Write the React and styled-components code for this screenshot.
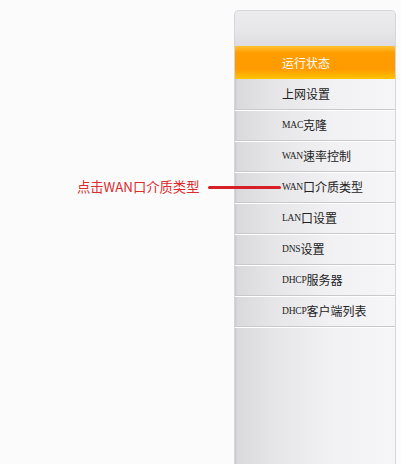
import React from 'react';
import styled, { createGlobalStyle } from 'styled-components';

const GlobalStyle = createGlobalStyle`
  html, body {
    margin: 0;
    padding: 0;
    background: #fbfbfc;
  }
`;

const Page = styled.div`
  width: 401px;
  height: 464px;
  display: flex;
  justify-content: flex-end;
  overflow: hidden;
  padding-top: 10px;
  box-sizing: border-box;
  position: relative;
`;

const Panel = styled.nav`
  width: 160px;
  margin-right: 5px;
  height: 470px;
  border: 1px solid #d6d6da;
  border-bottom: none;
  border-radius: 5px 5px 0 0;
  background: linear-gradient(90deg, #d9d9dc 0%, #e6e6e9 25%, #f1f0f3 60%, #f6f5f8 100%);
  box-shadow: inset 2px 0 2px -1px #c8c8cc;
  display: flex;
  flex-direction: column;
  overflow: hidden;
`;

const Header = styled.div`
  flex-shrink: 0;
  height: 35px;
  background: linear-gradient(180deg, #ececef 0%, #e6e6e9 60%, #dcdce0 100%);
`;

const MenuItem = styled.div`
  flex-shrink: 0;
  height: ${p => (p.$active ? 33 : 30)}px;
  display: flex;
  align-items: center;
  padding-left: 47px;
  font-family: "Liberation Serif", "Noto Sans CJK SC", serif;
  font-size: 12px;
  color: ${p => (p.$active ? '#ffffff' : '#222222')};
  background: ${p =>
    p.$active
      ? 'linear-gradient(180deg, #ffc233 0%, #ff9e00 20%, #ff9a00 70%, #ffc400 100%)'
      : 'transparent'};
  border-bottom: ${p => (p.$active ? 'none' : '1px solid #c9c9cd')};
  box-shadow: ${p => (p.$active ? 'none' : '0 1px 0 #ffffff')};
`;

const Latin = styled.span`
  font-size: 9.5px;
  letter-spacing: -0.2px;
`;

const Callout = styled.div`
  position: absolute;
  left: 77px;
  top: 178px;
  display: flex;
  align-items: center;
  gap: 9px;
`;

const CalloutText = styled.span`
  font-family: "Noto Sans CJK SC", "Noto Sans", sans-serif;
  font-size: 13.3px;
  color: #dd2a2a;
  line-height: 18px;
`;

const Pointer = styled.span`
  width: 73px;
  height: 3px;
  background: #d71f28;
  border-radius: 2px;
`;

const items = [
  ['', '运行状态', true],
  ['', '上网设置'],
  ['MAC', '克隆'],
  ['WAN', '速率控制'],
  ['WAN', '口介质类型'],
  ['LAN', '口设置'],
  ['DNS', '设置'],
  ['DHCP', '服务器'],
  ['DHCP', '客户端列表'],
];

export default function App() {
  return (
    <Page>
      <GlobalStyle />
      <Panel>
        <Header />
        {items.map(([latin, zh, active], i) => (
          <MenuItem key={i} $active={active}>
            {latin && <Latin>{latin}</Latin>}
            {zh}
          </MenuItem>
        ))}
      </Panel>
      <Callout>
        <CalloutText>点击WAN口介质类型</CalloutText>
        <Pointer />
      </Callout>
    </Page>
  );
}
